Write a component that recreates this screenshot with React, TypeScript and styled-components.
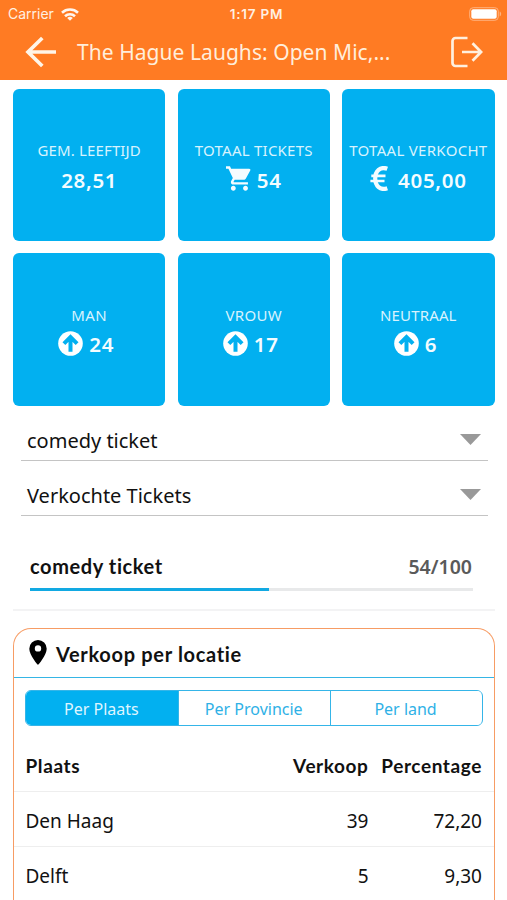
import React from "react";
import styled, { createGlobalStyle } from "styled-components";

const ORANGE = "#ff7b23";
const BLUE = "#02b0f0";

const GlobalStyle = createGlobalStyle`
  * { box-sizing: border-box; }
  html, body { margin: 0; padding: 0; background: #fff; }
  body { overflow: hidden; font-family: "Noto Sans", sans-serif; color: #111; }
`;

const Screen = styled.div`
  width: 507px;
  height: 900px;
  overflow: hidden;
  background: #fff;
`;

const StatusBar = styled.div`
  display: grid;
  grid-template-columns: 1fr auto 1fr;
  align-items: center;
  height: 26px;
  padding: 1px 5px 0 8px;
  color: #fff0e2;
  font-family: "Inter", sans-serif;
  font-size: 14px;
  line-height: 26px;
`;

const Carrier = styled.div`
  display: flex;
  align-items: center;
  gap: 7px;
`;

const Clock = styled.div`
  padding-left: 3px;
  font-size: 13.5px;
  font-weight: 600;
  letter-spacing: 0.75px;
`;

const BatterySlot = styled.div`
  display: flex;
  justify-content: flex-end;
`;

const Header = styled.header`
  height: 79.5px;
  background: ${ORANGE};
`;

const NavBar = styled.div`
  display: flex;
  align-items: center;
  height: 52px;
  padding: 0 24px 0 25px;
`;

const NavTitle = styled.h1`
  flex: 1;
  margin: 0 0 0 20px;
  font-size: 21px;
  font-weight: 400;
  line-height: 30px;
  letter-spacing: 0.05px;
  color: #ffeedb;
  white-space: nowrap;
`;

const TileGrid = styled.section`
  display: grid;
  grid-template-columns: repeat(3, 152.4px);
  grid-auto-rows: 152.4px;
  gap: 12.2px;
  padding: 9.2px 13px 0;
`;

const Tile = styled.div`
  display: flex;
  flex-direction: column;
  align-items: center;
  padding-top: 50.5px;
  border-radius: 6px;
  background: ${BLUE};
`;

const TileLabel = styled.div<{ $spacing: number }>`
  font-size: 15px;
  line-height: 22px;
  letter-spacing: ${(p) => p.$spacing}px;
  white-space: nowrap;
  color: #d8f3fe;
`;

const TileValue = styled.div<{ $icon?: string }>`
  display: flex;
  align-items: center;
  gap: ${(p) => (p.$icon === "euro" ? 10 : 6)}px;
  height: 37px;
  padding-right: ${(p) => (p.$icon === "up" ? 6 : 0)}px;
  font-size: 20.5px;
  font-weight: 600;
  letter-spacing: 0.7px;
  color: #f4fcff;
`;

const TileIcon = styled.svg<{ $width: number }>`
  width: ${(p) => p.$width}px;
  height: 25px;
  margin-top: -2px;
`;

const Selects = styled.section`
  padding: 0 19.5px 0 21px;
`;

const Select = styled.div`
  display: flex;
  align-items: center;
  justify-content: space-between;
  height: 55px;
  padding: 16px 6.5px 0 6px;
  border-bottom: 1.5px solid #c4c4c4;
  font-size: 20px;
`;

const Caret = styled.svg`
  width: 21px;
  height: 11px;
  margin-top: -3px;
  fill: #999;
`;

const Sales = styled.section`
  height: 95px;
  margin: 0 12.5px 0 13px;
  padding: 35px 21.5px 0 17px;
  border-bottom: 2px solid #f3f3f4;
`;

const SalesRow = styled.div`
  display: flex;
  justify-content: space-between;
  height: 37.5px;
  line-height: 30px;
  font-size: 20px;
`;

const SalesName = styled.span`
  font-family: "Lato", sans-serif;
  font-weight: 700;
  letter-spacing: 0.6px;
  color: #111;
`;

const SalesCount = styled.span`
  padding: 1px 1px 0 0;
  font-size: 19.5px;
  font-weight: 600;
  color: #5a5a5a;
`;

const Track = styled.div`
  height: 3px;
  background: #e8e9ea;
`;

const Fill = styled.div`
  height: 100%;
  background: #12a9e2;
`;

const Card = styled.section`
  height: 300px;
  margin: 17.5px 12px 0 13px;
  border: 1.5px solid #f79c64;
  border-bottom: 0;
  border-radius: 18px 18px 0 0;
`;

const CardHead = styled.div`
  display: flex;
  align-items: center;
  gap: 9px;
  height: 49px;
  padding: 0 0 2px 15px;
  border-bottom: 1.5px solid #35b5e5;
`;

const CardTitle = styled.h2`
  margin: 4px 0 0;
  font-family: "Lato", sans-serif;
  font-size: 20px;
  font-weight: 700;
  letter-spacing: 0.68px;
`;

const Tabs = styled.div`
  display: grid;
  grid-template-columns: repeat(3, 1fr);
  height: 36px;
  margin: 12px 11.5px 0 11px;
  overflow: hidden;
  border: 1.5px solid #35b5e8;
  border-radius: 6px;
`;

const Tab = styled.button<{ $active?: boolean }>`
  padding: 2px 1px 0 0;
  border: 0;
  border-left: ${(p) => (p.$active ? "0" : "1.5px solid #35b5e8")};
  background: ${(p) => (p.$active ? BLUE : "#fff")};
  color: ${(p) => (p.$active ? "#dff5ff" : "#2fb1e6")};
  font-family: "Noto Sans", sans-serif;
  font-size: 16px;
`;

const Table = styled.div`
  padding-top: 11px;
`;

const Row = styled.div<{ $head?: boolean }>`
  display: grid;
  grid-template-columns: 1fr 100px 113.5px;
  height: 55px;
  padding: 4px 12px 0 11.5px;
  align-items: center;
  border-bottom: 1px solid #eee;
  font-size: 19px;
  ${(p) =>
    p.$head &&
    `font-family: "Lato", sans-serif; font-weight: 700; letter-spacing: 0.6px; padding-top: 2px;`}
`;

const NumCell = styled.span`
  text-align: right;
`;

const tiles = [
  { label: "GEM. LEEFTIJD", value: "28,51", spacing: 0.15 },
  { label: "TOTAAL TICKETS", value: "54", icon: "cart", spacing: 0.24 },
  { label: "TOTAAL VERKOCHT", value: "405,00", icon: "euro", spacing: 0.3 },
  { label: "MAN", value: "24", icon: "up", spacing: 0.5 },
  { label: "VROUW", value: "17", icon: "up", spacing: 0.3 },
  { label: "NEUTRAAL", value: "6", icon: "up", spacing: 0.14 },
];

const places = [
  ["Den Haag", "39", "72,20"],
  ["Delft", "5", "9,30"],
];

function Icon({ name }: { name: string }) {
  if (name === "cart")
    return (
      <TileIcon $width={25} viewBox="1 2 20.5 20" fill="#f4fcff">
        <path d="M7 18c-1.1 0-1.99.9-1.99 2S5.9 22 7 22s2-.9 2-2-.9-2-2-2zM1 2v2h2l3.6 7.59-1.35 2.45c-.16.28-.25.61-.25.96 0 1.1.9 2 2 2h12v-2H7.42c-.14 0-.25-.11-.25-.25l.03-.12.9-1.63h7.45c.75 0 1.41-.41 1.75-1.03l3.58-6.49A1 1 0 0 0 20 4H5.21l-.94-2H1zm16 16c-1.1 0-1.99.9-1.99 2s.89 2 1.99 2 2-.9 2-2-.9-2-2-2z" />
      </TileIcon>
    );
  if (name === "euro")
    return (
      <TileIcon $width={18} viewBox="0 0 18 25" fill="none" stroke="#f4fcff">
        <path d="M17.3 2.7C10.2.2 5.2 5.2 5.2 12.5s5 12.3 12.1 9.8" strokeWidth="4.2" />
        <path d="M1.3 9.8h14.2M.4 15h14.1" strokeWidth="2.7" />
      </TileIcon>
    );
  return (
    <TileIcon $width={25} viewBox="0 0 25 25">
      <circle cx="12.5" cy="12.5" r="12.3" fill="#fff" />
      <path d="M12.5 20.7V7M5.9 12.7l6.6-6.6 6.6 6.6" fill="none" stroke={BLUE} strokeWidth="4" />
    </TileIcon>
  );
}

export default function App() {
  return (
    <Screen>
      <GlobalStyle />
      <Header>
        <StatusBar>
          <Carrier>
            Carrier
            <svg width="18" height="13" viewBox="0 0 18 13" fill="none" stroke="#fff6ee" strokeWidth="2.6">
              <path d="M1 4.7c4.5-4.2 11.5-4.2 16 0M4 8.2c2.8-2.6 7.2-2.6 10 0" />
              <path d="M9 12.8 6.2 10a4.1 4.1 0 0 1 5.6 0z" fill="#fff6ee" stroke="none" />
            </svg>
          </Carrier>
          <Clock>1:17 PM</Clock>
          <BatterySlot>
            <svg width="33" height="14" viewBox="0 0 33 14">
              <rect x="0.7" y="0.7" width="28.6" height="12.6" rx="3.5" fill="none" stroke="#ffb27e" strokeWidth="1" />
              <rect x="2.3" y="2.3" width="25.4" height="9.4" rx="2" fill="#fff" />
              <path d="M30.7 4.6c1.9.6 1.9 4.2 0 4.8z" fill="#ffb27e" />
            </svg>
          </BatterySlot>
        </StatusBar>
        <NavBar>
          <svg width="32" height="32" viewBox="0 0 32 32" fill="none" stroke="#fff5e8" strokeWidth="3.7">
            <path d="M31 16H3M17.3 2 3 16l14.3 14" />
          </svg>
          <NavTitle>The Hague Laughs: Open Mic,...</NavTitle>
          <svg width="33" height="32" viewBox="0 0 33 32" fill="none" stroke="#fff0df" strokeWidth="2.7">
            <path d="M17.5 2H5.5A3 3 0 0 0 2.5 5v22a3 3 0 0 0 3 3h12" />
            <path d="M12 16h19M22.5 7.3l8.6 8.7-8.6 8.7" />
          </svg>
        </NavBar>
      </Header>

      <TileGrid>
        {tiles.map((t) => (
          <Tile key={t.label}>
            <TileLabel $spacing={t.spacing}>{t.label}</TileLabel>
            <TileValue $icon={t.icon}>
              {t.icon && <Icon name={t.icon} />}
              <span>{t.value}</span>
            </TileValue>
          </Tile>
        ))}
      </TileGrid>

      <Selects>
        {["comedy ticket", "Verkochte Tickets"].map((name) => (
          <Select key={name}>
            <span>{name}</span>
            <Caret viewBox="0 0 21 11">
              <path d="M0 0h21L10.5 11z" />
            </Caret>
          </Select>
        ))}
      </Selects>

      <Sales>
        <SalesRow>
          <SalesName>comedy ticket</SalesName>
          <SalesCount>54/100</SalesCount>
        </SalesRow>
        <Track>
          <Fill style={{ width: `${(54 / 100) * 100}%` }} />
        </Track>
      </Sales>

      <Card>
        <CardHead>
          <svg width="18" height="25" viewBox="0 0 18 25">
            <path d="M9 0a8.7 8.7 0 0 0-8.7 8.7C.3 15.3 9 25 9 25s8.7-9.7 8.7-16.3A8.7 8.7 0 0 0 9 0zm0 5.2a3.2 3.2 0 1 1 0 6.4 3.2 3.2 0 0 1 0-6.4z" fillRule="evenodd" />
          </svg>
          <CardTitle>Verkoop per locatie</CardTitle>
        </CardHead>
        <Tabs>
          <Tab $active>Per Plaats</Tab>
          <Tab>Per Provincie</Tab>
          <Tab>Per land</Tab>
        </Tabs>
        <Table>
          <Row $head>
            <span>Plaats</span>
            <NumCell>Verkoop</NumCell>
            <NumCell>Percentage</NumCell>
          </Row>
          {places.map(([name, sold, share]) => (
            <Row key={name}>
              <span>{name}</span>
              <NumCell>{sold}</NumCell>
              <NumCell>{share}</NumCell>
            </Row>
          ))}
        </Table>
      </Card>
    </Screen>
  );
}
